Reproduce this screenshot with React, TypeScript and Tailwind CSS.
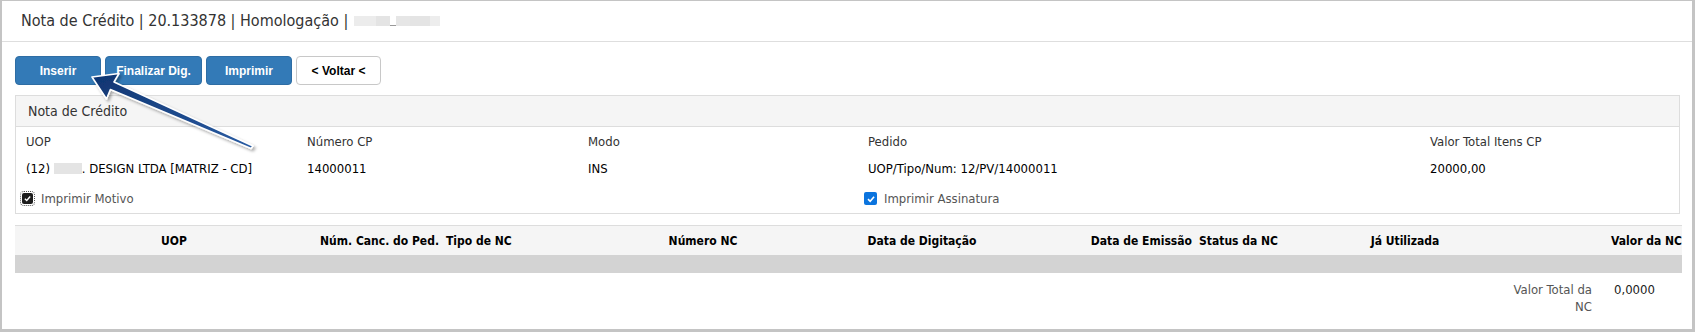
// Nota de Crédito — tela de digitação (homologação).
import type { ReactNode } from 'react';

const FONT = "font-['DejaVu_Sans_Condensed','DejaVu_Sans',sans-serif]";

function Blur({ className }: { className: string }) {
  return <span className={`inline-block align-middle bg-[#e4e4e4] ${className}`} />;
}

function Check({ dark }: { dark?: boolean }) {
  if (dark) {
    return (
      <span className="flex h-[11px] w-[11px] items-center justify-center rounded-[2px] bg-[#1d1d1d] outline outline-1 outline-dotted outline-[#555] outline-offset-1">
        <svg viewBox="0 0 12 12" className="h-[9px] w-[9px]">
          <path d="M2.5 6.2 5 8.6 9.6 3.4" fill="none" stroke="#fff" strokeWidth="1.8" />
        </svg>
      </span>
    );
  }
  return (
    <span className="flex h-[13px] w-[13px] items-center justify-center rounded-[2px] bg-[#0b74de]">
      <svg viewBox="0 0 12 12" className="h-[10px] w-[10px]">
        <path d="M2.4 6.2 5 8.7 9.7 3.3" fill="none" stroke="#fff" strokeWidth="1.9" />
      </svg>
    </span>
  );
}

function Field({ label, children }: { label: string; children: ReactNode }) {
  return (
    <div className="flex flex-col">
      <span className="h-[27px] leading-[27px] text-[13px] text-[#333]">{label}</span>
      <span className="h-[27px] leading-[27px] text-[13px] text-black">{children}</span>
    </div>
  );
}

function ActionButton({ label, width, outline }: { label: string; width: string; outline?: boolean }) {
  return (
    <button
      type="button"
      className={`h-[29px] ${width} rounded-[4px] border text-[12px] font-bold font-['Liberation_Sans',Arial,sans-serif] ${
        outline ? 'border-[#c8c8c8] bg-white text-black' : 'border-[#2e6da4] bg-[#337ab7] text-white'
      }`}
    >
      {label}
    </button>
  );
}

export default function App() {
  return (
    <div
      className={`relative h-[332px] w-[1695px] overflow-hidden border-t border-l-2 border-r-[3px] border-b-[3px] border-[#c4c4c4] bg-white ${FONT}`}
    >
      <div className="flex h-[41px] items-center border-b border-[#dedede] pl-[19px] text-[16px] text-[#333]">
        Nota de Crédito | 20.133878 | Homologação |
        <span className="ml-[6px] flex items-center gap-0">
          <Blur className="h-[10px] w-[22px] bg-[#ececec]" />
          <Blur className="h-[10px] w-[14px] bg-[#e0e0e0]" />
          <span className="mt-[8px] h-[1px] w-[6px] bg-[#999]" />
          <Blur className="h-[10px] w-[14px] bg-[#e6e6e6]" />
          <Blur className="h-[10px] w-[20px] bg-[#dadada]" />
          <Blur className="h-[10px] w-[10px] bg-[#ededed]" />
        </span>
      </div>

      <div className="mt-[14px] flex gap-[4px] pl-[13px]">
        <ActionButton label="Inserir" width="w-[86px]" />
        <ActionButton label="Finalizar Dig." width="w-[97px]" />
        <ActionButton label="Imprimir" width="w-[86px]" />
        <ActionButton label="< Voltar <" width="w-[85px]" outline />
      </div>

      <section className="ml-[13px] mr-[12px] mt-[10px] h-[119px] border border-[#dddddd]">
        <div className="flex h-[31px] items-center border-b border-[#dddddd] bg-[#f5f5f5] pl-[12px] text-[14px] text-[#333]">
          Nota de Crédito
        </div>
        <div className="grid grid-cols-[281px_281px_280px_562px_1fr] pl-[10px] pt-[1px]">
          <Field label="UOP">
            (12) <Blur className="mb-[2px] h-[11px] w-[28px]" />. DESIGN LTDA [MATRIZ - CD]
          </Field>
          <Field label="Número CP">14000011</Field>
          <Field label="Modo">INS</Field>
          <Field label="Pedido">UOP/Tipo/Num: 12/PV/14000011</Field>
          <Field label="Valor Total Itens CP">20000,00</Field>
        </div>
        <div className="grid grid-cols-[842px_1fr] pl-[6px] pt-[3px] text-[13px] text-[#555]">
          <label className="flex h-[27px] items-center gap-[8px]">
            <Check dark />
            Imprimir Motivo
          </label>
          <label className="flex h-[27px] items-center gap-[7px]">
            <Check />
            Imprimir Assinatura
          </label>
        </div>
      </section>

      <div className="ml-[13px] mr-[10px] mt-[11px] border-t border-[#dddddd]">
        <div className="grid h-[29px] grid-cols-[300px_126px_159px_206px_232px_157px_105px_210px_1fr] items-center whitespace-nowrap bg-[#f5f5f5] text-[12px] font-bold text-black">
          <span className="pl-[18px] text-center">UOP</span>
          <span className="pr-[2px] text-right">Núm. Canc. do Ped.</span>
          <span className="pl-[5px]">Tipo de NC</span>
          <span className="text-center">Número NC</span>
          <span className="text-center">Data de Digitação</span>
          <span className="pr-[3px] text-right">Data de Emissão</span>
          <span className="pl-[4px]">Status da NC</span>
          <span className="text-center">Já Utilizada</span>
          <span className="text-right">Valor da NC</span>
        </div>
        <div className="h-[18px] bg-[#d3d3d3]" />
        <div className="flex pt-[8px] text-[13px] leading-[17px]">
          <div className="w-[1577px] text-right text-[#555]">
            <div className="ml-auto w-[90px]">Valor Total da NC</div>
          </div>
          <div className="pl-[22px] text-[#222]">0,0000</div>
        </div>
      </div>

      <svg
        className="pointer-events-none absolute left-0 top-0"
        width="300"
        height="170"
        viewBox="0 0 300 170"
      >
        <defs>
          <linearGradient id="arrowFill" x1="0" y1="0" x2="1" y2="1">
            <stop offset="0" stopColor="#0f3470" />
            <stop offset="1" stopColor="#2a5ca3" />
          </linearGradient>
          <filter id="arrowShadow" x="-20%" y="-20%" width="140%" height="140%">
            <feDropShadow dx="2" dy="2" stdDeviation="1.6" floodColor="#000" floodOpacity="0.35" />
          </filter>
        </defs>
        <polygon
          points="90,76 117,72.5 112,81 251,145 249,147.5 108.4,88.5 104.5,98"
          fill="url(#arrowFill)"
          stroke="#fff"
          strokeWidth="1.6"
          strokeLinejoin="round"
          filter="url(#arrowShadow)"
        />
      </svg>
    </div>
  );
}
